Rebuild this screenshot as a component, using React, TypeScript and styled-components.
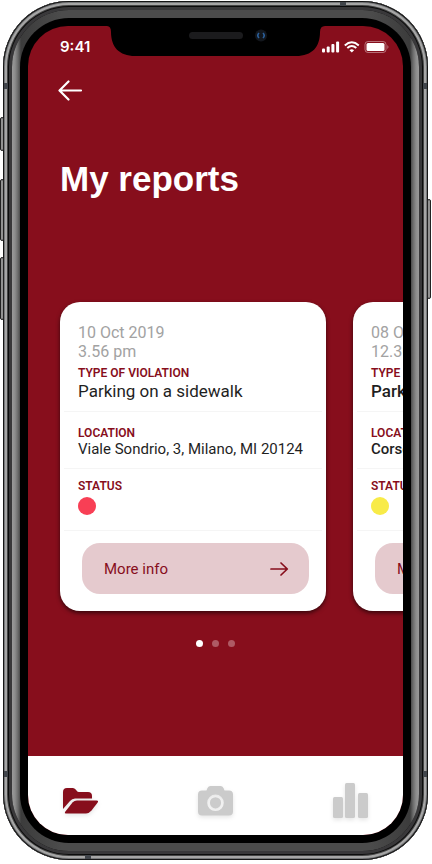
import React from "react";
import styled, { createGlobalStyle } from "styled-components";

const wine = "#870e1c";

const GlobalStyle = createGlobalStyle`
  *, *::before, *::after { box-sizing: border-box; }
  body { margin: 0; background: #fff; font-family: Roboto, "Liberation Sans", sans-serif; }
  button { font: inherit; border: 0; padding: 0; background: none; cursor: pointer; }
  svg { display: block; }
  h1, p, dl, dt, dd, ul { margin: 0; padding: 0; }
`;

const Phone = styled.main`
  position: relative;
  display: flex;
  flex-direction: column;
  min-height: calc(100vh - 5px);
  margin: 1px 4px 3px 3px;
  padding: 25px;
  border-radius: 66px;
  background: #000;
  box-shadow:
    inset 0 0 0 1px #161616,
    inset 0 0 0 2px #77787a,
    inset 0 0 0 4px #a6a6a6,
    inset 0 0 0 5px #444444,
    inset 0 0 0 6px #0c0c0c,
    inset 0 0 0 9px #39383a;

  &::before {
    content: "";
    position: absolute;
    inset: 9px;
    border-radius: 57px;
    background: linear-gradient(
      90deg,
      #9a9a9a 0, #8c8c8c 3px, #6a6a6a 6px, #3c3c3c 9px, #4c4c4c 50px,
      #4c4c4c calc(100% - 50px), #3c3c3c calc(100% - 9px), #6a6a6a calc(100% - 6px), #8c8c8c calc(100% - 3px), #9a9a9a 100%
    );
  }

  &::after {
    content: "";
    position: absolute;
    inset: 17px;
    border-radius: 49px;
    background: #000;
  }
`;

const SideKey = styled.span<{ $side: "left" | "right"; $top: number; $length: number }>`
  position: absolute;
  ${(p) => p.$side}: -3px;
  top: ${(p) => p.$top}px;
  width: 4px;
  height: ${(p) => p.$length}px;
  border: 1px solid #222;
  border-radius: 2px;
  background: #929292;
`;

const Antenna = styled.span<{ $edge: "left" | "right" | "top" | "bottom" }>`
  position: absolute;
  background: #41454b;
  ${(p) =>
    p.$edge === "left" || p.$edge === "right"
      ? `${p.$edge}: 1px; width: 4px; height: 6px;`
      : `${p.$edge}: 1px; width: 6px; height: 4px;`}
`;
const SideAntenna = styled(Antenna)<{ $low?: boolean }>`
  ${(p) => (p.$low ? "bottom: 83px;" : "top: 82px;")}
`;
const TopAntenna = styled(Antenna)`
  right: 82px;
`;
const BottomAntenna = styled(Antenna)`
  left: 82px;
`;

const Screen = styled.div`
  position: relative;
  z-index: 1;
  display: flex;
  flex: 1;
  flex-direction: column;
  overflow: hidden;
  border-radius: 40px;
  background: ${wine};
  color: #fff;
`;

const Notch = styled.svg`
  position: absolute;
  top: 0;
  left: 50%;
  margin-left: -109px;
`;

const StatusBar = styled.div`
  display: flex;
  align-items: center;
  justify-content: space-between;
  height: 42px;
  padding: 0 13px 0 32px;
  font: 600 15px/18px Inter, sans-serif;
`;

const BackButton = styled.button`
  width: 24px;
  height: 24px;
  margin: 10px 0 0 30px;
  color: #fff;
`;

const Title = styled.h1`
  margin: 55px 32px 0;
  font: 700 35px/44px "Liberation Sans", Arial, sans-serif;
`;

const Carousel = styled.ul`
  display: flex;
  gap: 27px;
  margin-top: 91px;
  padding: 10px 32px 10px;
  overflow-x: auto;
  scrollbar-width: none;
  list-style: none;
`;

const Card = styled.li`
  flex: 0 0 266px;
  padding: 11px 0 17px;
  border-radius: 20px;
  background: #fff;
  color: #1f1f1f;
  box-shadow: 0 2px 4px rgba(0, 0, 0, 0.6);
`;

const Stamp = styled.p`
  padding: 10px 18px 3px;
  color: #a2a2a2;
  font-size: 16px;
  line-height: 19px;
`;

const Field = styled.div<{ $top: number; $bottom: number }>`
  margin: 0 4px;
  padding: ${(p) => p.$top}px 14px ${(p) => p.$bottom}px;
  border-bottom: 1px solid #f5f5f5;
`;

const Label = styled.dt`
  padding-top: 2px;
  color: ${wine};
  font-size: 12px;
  line-height: 14px;
  font-weight: 600;
`;

const Value = styled.dd<{ $large?: boolean; $strong?: boolean }>`
  font-size: ${(p) => (p.$large ? 17 : 15)}px;
  line-height: ${(p) => (p.$large ? 22 : 18)}px;
  font-weight: ${(p) => (p.$strong ? 500 : 400)};
  white-space: nowrap;
`;

const StatusDot = styled.dd<{ $color: string }>`
  width: 18px;
  height: 18px;
  margin-top: 4px;
  border-radius: 50%;
  background: ${(p) => p.$color};
`;

const MoreButton = styled.button`
  display: flex;
  align-items: center;
  justify-content: space-between;
  width: calc(100% - 39px);
  height: 51px;
  margin: 12px 17px 0 22px;
  && { padding: 0 20px 0 22px; }
  border-radius: 18px;
  background: #e5cace;
  color: ${wine};
  && { font-size: 15px; }
`;

const Dots = styled.div`
  display: flex;
  justify-content: center;
  gap: 9px;
  margin: 19px 0 24px;
`;

const Dot = styled.button<{ $active?: boolean }>`
  width: 7px;
  height: 7px;
  border-radius: 50%;
  background: ${(p) => (p.$active ? "#fff" : "#ae5a64")};
`;

const TabBar = styled.nav`
  display: flex;
  align-items: center;
  justify-content: space-between;
  height: 79px;
  margin-top: auto;
  padding: 10px 35px 0;
  background: #fff;
`;

const Tab = styled.button<{ $active?: boolean }>`
  width: 36px;
  height: 40px;
  color: ${(p) => (p.$active ? wine : "#cbcbcb")};
  filter: drop-shadow(0 2px 2px rgba(0, 0, 0, 0.1));
`;

type Report = { date: string; time: string; type: string; place: string; color: string; unread?: boolean };

const reports: Report[] = [
  { date: "10 Oct 2019", time: "3.56 pm", type: "Parking on a sidewalk", place: "Viale Sondrio, 3, Milano, MI 20124", color: "#f83f55" },
  { date: "08 Oct 2019", time: "12.30 pm", type: "Parking on a sidewalk", place: "Corso Buenos Aires, Milano", color: "#f8eb48", unread: true },
];

function ReportCard({ report }: { report: Report }) {
  return (
    <Card>
      <Stamp>{report.date}<br />{report.time}</Stamp>
      <dl>
        <Field $top={0} $bottom={9}>
          <Label>TYPE OF VIOLATION</Label>
          <Value $large $strong={report.unread}>{report.type}</Value>
        </Field>
        <Field $top={12} $bottom={10}>
          <Label>LOCATION</Label>
          <Value $strong={report.unread}>{report.place}</Value>
        </Field>
        <Field $top={8} $bottom={15}>
          <Label>STATUS</Label>
          <StatusDot $color={report.color} />
        </Field>
      </dl>
      <MoreButton>
        More info
        <svg width="20" height="16" viewBox="0 0 20 16" fill="none" stroke="currentColor" strokeWidth="1.7" strokeLinecap="round" strokeLinejoin="round">
          <path d="M2 8H18M12 2L18.3 8L12 14" />
        </svg>
      </MoreButton>
    </Card>
  );
}

export default function App() {
  return (
    <>
      <GlobalStyle />
      <Phone>
        <SideKey $side="left" $top={116} $length={34} />
        <SideKey $side="left" $top={178} $length={62} />
        <SideKey $side="left" $top={256} $length={63} />
        <SideKey $side="right" $top={198} $length={100} />
        <SideAntenna $edge="left" />
        <SideAntenna $edge="right" />
        <SideAntenna $edge="left" $low />
        <SideAntenna $edge="right" $low />
        <TopAntenna $edge="top" />
        <BottomAntenna $edge="bottom" />
        <Screen>
          <Notch width="218" height="30" viewBox="0 0 218 30" aria-hidden="true">
            <path d="M0 0Q4 0 4 6C4 21 12 30 28 30H189C205 30 213 21 213 6Q213 0 218 0Z" fill="#000" />
            <rect x="82" y="6" width="54" height="7" rx="3.5" fill="#1b1b1d" />
            <circle cx="154" cy="9.500" r="6" fill="#12161c" />
            <path d="M152 7Q149.500 9.500 152 12M156 7Q158.500 9.500 156 12" fill="none" stroke="#2b609c" strokeWidth="1.600" />
          </Notch>
          <StatusBar>
            <span>9:41</span>
            <svg width="68" height="12" viewBox="0 0 68 12" fill="#fff" role="img" aria-label="Signal, Wi-Fi and battery">
              <rect x="0" y="7.500" width="3" height="4" rx="1" />
              <rect x="4.700" y="5.500" width="3" height="6" rx="1" />
              <rect x="9.400" y="3" width="3" height="8.500" rx="1" />
              <rect x="14.100" y="0.500" width="3" height="11" rx="1" />
              <g fill="none" stroke="#fff" strokeWidth="2">
                <path d="M22.800 4.400Q29.800 -1.800 36.800 4.400" />
                <path d="M25.300 7Q29.800 3.100 34.300 7" />
              </g>
              <path d="M27.500 9.200Q29.800 7.200 32.100 9.200L29.800 11.600Z" />
              <rect x="43" y="0.500" width="21" height="11" rx="3" fill="none" stroke="#fff" strokeOpacity=".4" />
              <rect x="44.500" y="2" width="18" height="8" rx="1.500" />
              <path d="M65.300 4Q67.700 6 65.300 8Z" opacity=".4" />
            </svg>
          </StatusBar>
          <BackButton aria-label="Back">
            <svg width="26" height="24" viewBox="0 0 26 24" fill="none" stroke="currentColor" strokeWidth="2.200" strokeLinecap="round" strokeLinejoin="round">
              <path d="M23 12.500H2M10.500 3.500L1.500 12.500L10.500 21.500" />
            </svg>
          </BackButton>
          <Title>My reports</Title>
          <Carousel>
            {reports.map((r) => <ReportCard key={r.date} report={r} />)}
          </Carousel>
          <Dots>
            <Dot $active aria-label="Report 1" />
            <Dot aria-label="Report 2" />
            <Dot aria-label="Report 3" />
          </Dots>
          <TabBar>
            <Tab $active aria-label="Reports">
              <svg width="36" height="40" viewBox="0 0 36 40" fill="currentColor">
                <path d="M0 28V11Q0 7 4 7H10Q12 7 13.500 9.500Q14.500 11 16 11H25Q29 11 29 15V17.500H12Q9 17.500 7 20Z" />
                <path d="M2 31L9.500 21.500Q11.200 19.500 14 19.500H33.500Q36 19.500 34.500 21.700L28.500 29.500Q26 32.500 23 32.500H3Q1.200 32.500 2 31Z" />
              </svg>
            </Tab>
            <Tab aria-label="Camera">
              <svg width="36" height="40" viewBox="0 0 36 40" fill="currentColor">
                <path fillRule="evenodd" d="M4 9.500H8.500L9.500 7Q10.500 5 12.500 5H22.500Q24.500 5 25.500 7L26.500 9.500H31Q35 9.500 35 13.500V30.500Q35 34.500 31 34.500H4Q0 34.500 0 30.500V13.500Q0 9.500 4 9.500ZM17.500 13.500A8.300 8.300 0 1 0 17.500 30.100A8.300 8.300 0 1 0 17.500 13.500ZM17.500 16.200A5.600 5.600 0 1 1 17.500 27.400A5.600 5.600 0 1 1 17.500 16.200Z" />
              </svg>
            </Tab>
            <Tab aria-label="Statistics">
              <svg width="36" height="40" viewBox="0 0 36 40" fill="currentColor">
                <rect x="1" y="16" width="10" height="21" rx="1.500" />
                <rect x="13" y="2" width="10" height="35" rx="1.500" />
                <rect x="26" y="12" width="10" height="25" rx="1.500" />
              </svg>
            </Tab>
          </TabBar>
        </Screen>
      </Phone>
    </>
  );
}
